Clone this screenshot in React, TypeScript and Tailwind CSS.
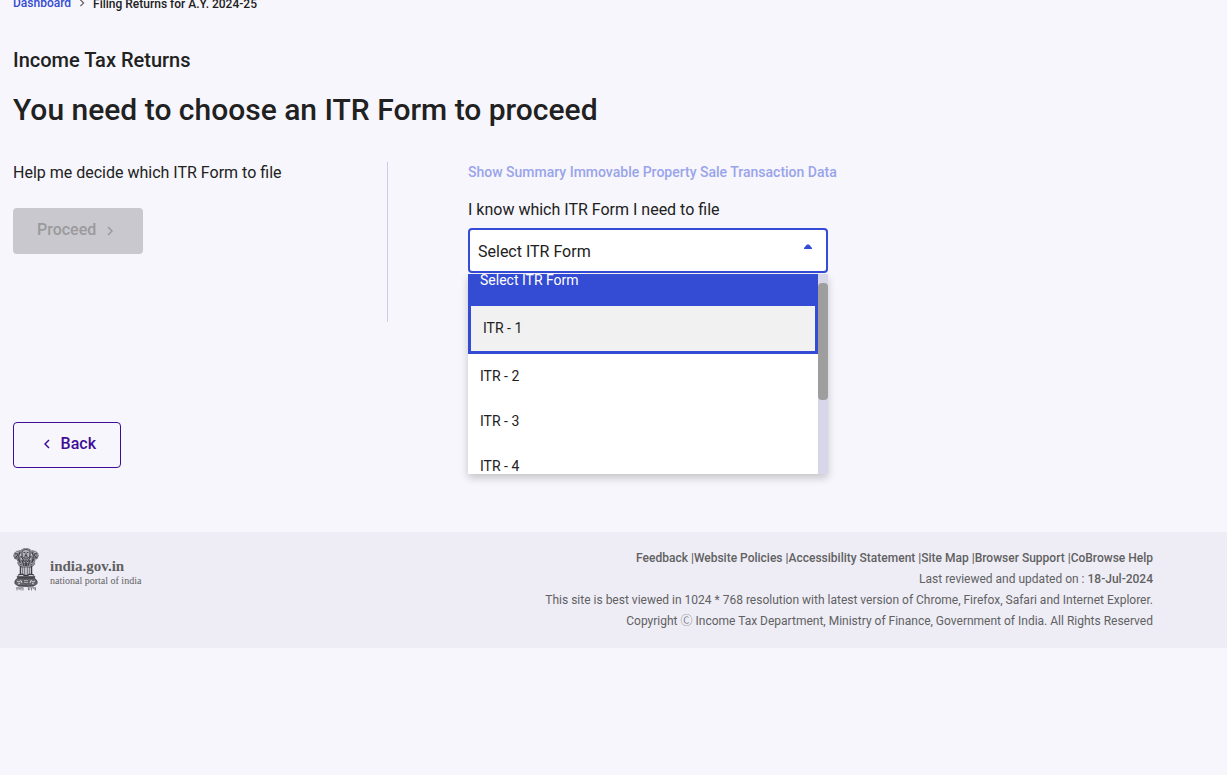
import React, { useLayoutEffect, useRef, useState } from 'react';

const FORMS = ['Select ITR Form', 'ITR - 1', 'ITR - 2', 'ITR - 3', 'ITR - 4', 'ITR - 5'];

const FOOTER_LINKS = [
  'Feedback',
  'Website Policies',
  'Accessibility Statement',
  'Site Map',
  'Browser Support',
  'CoBrowse Help',
];

type ChevronProps = { direction?: 'left' | 'right'; className?: string };

const Chevron: React.FC<ChevronProps> = ({ direction = 'right', className }) => (
  <svg viewBox="0 0 6 10" width="6" height="10" className={className} fill="none" stroke="currentColor" strokeWidth="1.5" aria-hidden="true">
    <path d={direction === 'right' ? 'M1 1l4 4-4 4' : 'M5 1L1 5l4 4'} />
  </svg>
);

const Emblem: React.FC = () => (
  <svg viewBox="0 0 26 44" width="26" height="44" aria-hidden="true" fill="none" stroke="#3d3c42">
    {/* lion heads */}
    <path d="M8 2.500Q9 .5 13 .3 17 .5 18 2.500l3 .3q4 1 4.500 4.500l-1 3-2.500 1.500-.5 5-3.500 2.500H8.500L5 16.800 4.500 12 1.500 10.500l-1-3Q1 4 5 2.800z" fill="#8b8a92" strokeWidth=".5" strokeDasharray="2 1" />
    <path d="M9 4Q10 1.500 13 1.500T17 4l-.5 5L13 11 9.500 9z" fill="#b3b2ba" strokeWidth=".7" />
    <path d="M10.500 4.500h1.500M14 4.500h1.500M13 4.500v2l-1 1h2l-1-1M11 9h4M2 6l2-1 1 2-2 2M24 6l-2-1-1 2 2 2M1.500 9.500l3 .5M24.500 9.500l-3 .5" strokeWidth=".9" />
    <path d="M7 4q-2 3-1 7l2 6M19 4q2 3 1 7l-2 6M8 8l3 5 2 5 2-5 3-5M9 12l2 6M17 12l-2 6M5 11l2 3M21 11l-2 3M13 12v6" strokeWidth="1" />
    <path d="M7 6l1 1-1.500 1M19 6l-1 1 1.500 1M8 10l1 2M18 10l-1 2M11 14l1 1M15 14l-1 1M7 15l1 1M19 15l-1 1M3 4l2 1M23 4l-2 1" stroke="#dddce5" strokeWidth=".7" />
    {/* legs */}
    <path d="M7.500 18v9M18.500 18v9" strokeWidth="1.500" />
    <path d="M9.800 19v8M11.800 19v8M14.200 19v8M16.200 19v8" strokeWidth=".9" />
    <path d="M5 27.300l2-1h3l1 1h4l1-1h3l2 1" strokeWidth="1.200" />
    {/* abacus with the wheel */}
    <path d="M4 28.200h18l-.5 1.800h-17z" fill="#4b4a50" strokeWidth=".5" />
    <path d="M4 30.500Q1 33 2 35.500q1 2 4 2.300h14q3-.3 4-2.300 1-2.500-2-5z" fill="#66656c" strokeWidth=".8" />
    <circle cx="13" cy="33.500" r="2.500" fill="#c9c8d0" strokeWidth=".8" />
    <path d="M13 31v5M10.500 33.500h5" strokeWidth=".6" />
    <path d="M4 33l2 1 2-1.500 1 2.500M22 33l-2 1-2-1.500-1 2.500M5 36l2-.5M21 36l-2-.5" stroke="#dddce5" strokeWidth=".9" />
    <path d="M5 37.800q8 1 16 0" strokeWidth="1" />
    {/* motto */}
    <path d="M3 39.800h7.500M14.500 39.800H23M4 40v2.500M6 40v1.500l1-1M8 40v2.500M10 40v2.500M15.500 40v2l1.500-1M18.500 40v2.500M20.500 40l1 1.500M22.500 40v2.500" stroke="#5a5960" strokeWidth=".7" />
  </svg>
);

const FormSelect: React.FC = () => {
  const [value, setValue] = useState(FORMS[0]);
  const listRef = useRef<HTMLUListElement>(null);

  useLayoutEffect(() => {
    if (listRef.current) listRef.current.scrollTop = 16;
  }, []);

  return (
    <div className="relative mt-2 w-[360px]">
      <select
        id="itr-form"
        value={value}
        onChange={(e) => setValue(e.target.value)}
        className="block h-[45px] w-full appearance-none rounded border-2 border-[#344bd4] bg-white px-2 pt-0.5 text-base text-[#212121] outline-none"
      >
        {FORMS.map((form) => (
          <option key={form}>{form}</option>
        ))}
      </select>
      <svg viewBox="0 0 8 5" width="8" height="5" className="pointer-events-none absolute top-4 right-4 fill-[#344bd4]" aria-hidden="true">
        <path d="M0 5V4l3-3.500h2L8 4v1z" />
      </svg>

      {/* Options panel */}
      <div className="absolute top-full left-0 z-10 mt-px flex h-[200px] w-full bg-white shadow-[0_4px_8px_rgba(0,0,0,0.2)]">
        <ul ref={listRef} role="listbox" aria-label="ITR Form" className="flex-1 overflow-y-auto text-sm text-[#212121] [scrollbar-width:none]">
          {FORMS.map((form, index) => (
            <li
              key={form}
              role="option"
              aria-selected={form === value}
              onClick={() => setValue(form)}
              className={
                form === value
                  ? 'bg-[#344bd4] px-3 leading-[45px] text-white'
                  : index === 1
                    ? 'border-[3px] border-[#344bd4] bg-[#f1f1f1] px-3 leading-[45px]'
                    : 'px-3 leading-[45px]'
              }
            >
              {form}
            </li>
          ))}
        </ul>
        <div className="w-[10px] bg-[#d8d7e9] pt-[9px]">
          <div className="h-[117px] rounded bg-[#9e9e9e]" />
        </div>
      </div>
    </div>
  );
};

export default function App() {
  return (
    <div className="flow-root min-h-screen bg-[#f7f6fc] font-['Roboto',sans-serif] text-[#212121]">
      <main className="max-w-[1166px] px-[13px] pb-16">
        <nav aria-label="Breadcrumb" className="-mt-[7px] flex items-center text-xs leading-5 font-medium">
          <a href="#" className="pb-0.5 text-[#344bd4]">Dashboard</a>
          <Chevron className="mx-2 mb-0.5 h-2 text-[#616161]" />
          <span>Filing Returns for A.Y. 2024-25</span>
        </nav>

        <h2 className="mt-[31px] text-xl leading-7 font-medium">Income Tax Returns</h2>
        <h1 className="mt-4 text-3xl leading-10 font-medium">You need to choose an ITR Form to proceed</h1>

        <div className="mt-8 flex">
          <section className="h-40 w-[375px] border-r border-[#cccbe0]">
            <p className="leading-[22px]">Help me decide which ITR Form to file</p>
            <button type="button" disabled className="mt-6 flex h-[46px] w-[130px] items-center rounded bg-[#c9c8ce] px-6 pb-0.5 font-medium text-[#9a9a9c]">
              Proceed
              <Chevron className="mt-0.5 ml-[11px]" />
            </button>
          </section>
          <section className="ml-20">
            <a href="#" className="block text-sm leading-5 font-medium text-[#99a4ea]">
              Show Summary Immovable Property Sale Transaction Data
            </a>
            <label htmlFor="itr-form" className="mt-[18px] block leading-5">
              I know which ITR Form I need to file
            </label>
            <FormSelect />
          </section>
        </div>

        <button type="button" className="mt-[100px] flex h-[46px] w-[108px] items-center justify-end rounded border border-[#3f0d95] px-6 pb-0.5 font-medium text-[#3f0d95]">
          <Chevron direction="left" className="mr-[11px]" />
          Back
        </button>
      </main>

      <footer className="bg-[#eeedf6] text-xs leading-[21px] text-[#616161]">
        <div className="flex max-w-[1166px] items-start justify-between px-[13px] py-4">
          <a href="#" className="flex items-center gap-[11px] font-['Liberation_Serif',serif]">
            <Emblem />
            <span className="pt-1.5">
              <span className="block text-[15px] leading-4 font-bold">india.gov.in</span>
              <span className="block text-[10px] leading-[14px]">national portal of india</span>
            </span>
          </a>
          <div className="text-right">
            <p className="font-medium">
              {FOOTER_LINKS.map((link, index) => (
                <React.Fragment key={link}>
                  {index > 0 && ' |'}
                  <a href="#">{link}</a>
                </React.Fragment>
              ))}
            </p>
            <p>
              Last reviewed and updated on : <span className="font-medium">18-Jul-2024</span>
            </p>
            <p>This site is best viewed in 1024 * 768 resolution with latest version of Chrome, Firefox, Safari and Internet Explorer.</p>
            <p>
              Copyright <span className="font-['Noto_Sans_CJK_SC',sans-serif] leading-none font-light">Ⓒ</span> Income Tax Department, Ministry of Finance, Government of India. All Rights Reserved
            </p>
          </div>
        </div>
      </footer>
    </div>
  );
}
